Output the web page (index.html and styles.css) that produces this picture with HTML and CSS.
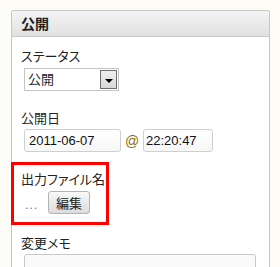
FILE: index.html
```html
<!DOCTYPE html>
<html lang="ja">
<head>
<meta charset="utf-8">
<link rel="stylesheet" href="styles.css">
</head>
<body>
<div class="panel">
  <div class="panel-head">公開</div>
  <div class="panel-body">
    <div class="field">
      <div class="label">ステータス</div>
      <div class="select"><span class="select-text">公開</span><span class="select-btn"><span class="tri"></span></span></div>
    </div>
    <div class="field">
      <div class="label">公開日</div>
      <div class="row">
        <div class="input date">2011-06-07</div>
        <span class="at">@</span>
        <div class="input time">22:20:47</div>
      </div>
    </div>
    <div class="field marked">
      <div class="label">出力ファイル名</div>
      <div class="row">
        <span class="dots">...</span>
        <span class="button">編集</span>
      </div>
    </div>
    <div class="field">
      <div class="label">変更メモ</div>
      <div class="textarea"></div>
    </div>
  </div>
</div>
</body>
</html>
```
FILE: styles.css
```css
html, body {
  margin: 0;
  background: #fdfcf6;
  overflow: hidden;
}
body {
  padding: 10px 0 0 11px;
  height: 267px;
  box-sizing: border-box;
  font-family: "Noto Sans CJK JP", "Liberation Sans", sans-serif;
  color: #222;
}
.panel {
  width: 259px;
  box-sizing: border-box;
  border: 1px solid #c6c6c6;
  border-bottom: none;
  border-radius: 3px 3px 0 0;
  background: #fff;
  height: 257px;
}
.panel-head {
  height: 25px;
  line-height: 25px;
  padding-left: 9px;
  border-bottom: 1px solid #c8c8c8;
  background: linear-gradient(#f4f4f4, #e1e1e1);
  font-weight: bold;
  font-size: 14px;
  color: #222;
  border-radius: 3px 3px 0 0;
}
.panel-body {
  padding: 10px 0 0 9px;
}
.field {
  margin-bottom: 18px;
  position: relative;
}
.label {
  font-size: 13px;
  line-height: 17px;
  height: 17px;
  font-feature-settings: "palt";
}
.select {
  margin: 4px 0 0 3px;
  width: 95px;
  height: 23px;
  box-sizing: border-box;
  border: 1px solid #c4c4c4;
  display: flex;
  align-items: stretch;
  background: #fff;
}
.select-text {
  flex: 1;
  font-size: 13px;
  line-height: 20px;
  padding-left: 3px;
}
.select-btn {
  width: 15px;
  margin: 1px;
  border: 1px solid #6e6e6e;
  background: linear-gradient(#f0f0f0, #d8d8d8);
  display: flex;
  align-items: center;
  justify-content: center;
}
.tri {
  width: 0;
  height: 0;
  border-left: 4px solid transparent;
  border-right: 4px solid transparent;
  border-top: 4px solid #000;
  margin-top: 2px;
}
.row {
  display: flex;
  align-items: center;
  margin: 3px 0 0 3px;
}
.input {
  height: 23px;
  box-sizing: border-box;
  border: 1px solid #cfcfcf;
  border-radius: 3px;
  background: linear-gradient(#fff, #f7f7f7);
  font-family: "Liberation Sans", sans-serif;
  font-size: 13px;
  line-height: 21px;
  padding-left: 4px;
  color: #111;
}
.date { width: 97px; }
.time { width: 70px; padding-left: 2px; }
.at {
  width: 22px;
  text-align: center;
  font-family: "Liberation Sans", sans-serif;
  font-size: 14px;
  color: #8c6a12;
}
.marked {
  margin-bottom: 20px;
}
.marked .row {
  margin-top: 4px;
}
.marked::after {
  content: "";
  position: absolute;
  left: -10px;
  top: -8px;
  width: 98px;
  height: 63px;
  box-sizing: border-box;
  border: 3px solid #f00;
}
.dots {
  width: 23px;
  font-family: "Liberation Sans", sans-serif;
  font-size: 12px;
  letter-spacing: 1px;
  color: #2f86d8;
  margin-left: 1px;
  padding-top: 4px;
}
.button {
  width: 42px;
  height: 23px;
  box-sizing: border-box;
  border: 1px solid #b4b4b4;
  border-radius: 3px;
  background: linear-gradient(#f9f9f9, #dcdcdc);
  font-size: 13px;
  line-height: 21px;
  text-align: center;
}
.textarea {
  margin: 3px 0 0 3px;
  width: 232px;
  height: 40px;
  box-sizing: border-box;
  border: 1px solid #c8c8c8;
  border-radius: 3px;
  background: #fafafa;
}
```
